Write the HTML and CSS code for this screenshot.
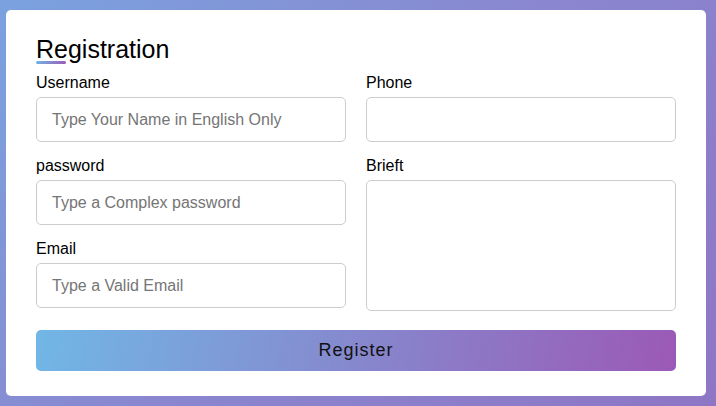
FILE: index.html
```
<!DOCTYPE html>
<html lang="en">
<head>
<meta charset="utf-8">
<title>Registration</title>
<link rel="stylesheet" href="styles.css">
</head>
<body>
<div class="card">
  <div class="title">Registration</div>
  <form class="form">
    <div class="fields">
      <div class="col">
        <label class="field">
          <span class="label">Username</span>
          <input class="input" type="text" placeholder="Type Your Name in English Only">
        </label>
        <label class="field">
          <span class="label">password</span>
          <input class="input" type="password" placeholder="Type a Complex password">
        </label>
        <label class="field">
          <span class="label">Email</span>
          <input class="input" type="email" placeholder="Type a Valid Email">
        </label>
      </div>
      <div class="col">
        <label class="field">
          <span class="label">Phone</span>
          <input class="input" type="text">
        </label>
        <label class="field">
          <span class="label">Brieft</span>
          <textarea class="input area"></textarea>
        </label>
      </div>
    </div>
    <button class="button" type="button">Register</button>
  </form>
</div>
</body>
</html>
```
FILE: styles.css
```
* { box-sizing: border-box; }
html, body { margin: 0; padding: 0; }
body {
  width: 716px;
  height: 406px;
  background: linear-gradient(135deg, #7aa2de 0%, #8a86cf 50%, #8e76c5 100%);
  font-family: "Liberation Sans", Arial, sans-serif;
  padding: 10px 10px 10px 6px;
  overflow: hidden;
}
.card {
  width: 700px;
  height: 386px;
  background: #fff;
  border-radius: 5px;
  padding: 25px 30px;
}
.title {
  font-size: 25px;
  position: relative;
  color: #000;
  line-height: 29px;
}
.title::before {
  content: "";
  position: absolute;
  left: 0;
  bottom: 0;
  width: 30px;
  height: 3px;
  border-radius: 5px;
  background: linear-gradient(135deg, #71b7e6, #9b59b6);
}
.fields {
  display: grid;
  grid-template-columns: 1fr 1fr;
  column-gap: 20px;
  margin-top: 10px;
}
.col { display: flex; flex-direction: column; }
.field { display: flex; flex-direction: column; margin-bottom: 15px; }
.label {
  font-size: 16px;
  line-height: 18px;
  margin-bottom: 5px;
  color: #000;
}
.input {
  height: 45px;
  width: 100%;
  border: 1px solid #ccc;
  border-radius: 5px;
  padding-left: 15px;
  font-size: 16px;
  font-family: "Liberation Sans", Arial, sans-serif;
  outline: none;
}
.input::placeholder { color: #757575; }
.area { height: 131px; resize: none; padding-top: 10px; }
.button {
  display: block;
  width: 100%;
  height: 41px;
  margin-top: 4px;
  border: none;
  border-radius: 5px;
  background: linear-gradient(100deg, #71b7e6, #9b59b6);
  font-family: "Liberation Sans", Arial, sans-serif;
  font-size: 18px;
  letter-spacing: 1px;
  color: #111;
}
```
